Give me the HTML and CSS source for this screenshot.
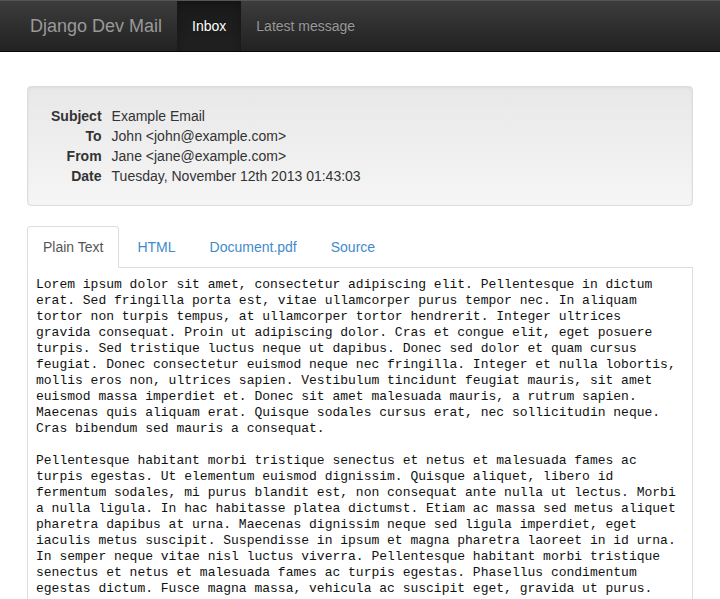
FILE: index.html
```html
<!DOCTYPE html>
<html lang="en">
<head>
<meta charset="utf-8">
<title>Django Dev Mail</title>
<link rel="stylesheet" href="styles.css">
</head>
<body>
<nav class="navbar">
  <a class="brand" href="#">Django Dev Mail</a>
  <ul class="nav">
    <li class="nav-item active"><a href="#">Inbox</a></li>
    <li class="nav-item"><a href="#">Latest message</a></li>
  </ul>
</nav>
<main class="main">
  <section class="well">
    <div class="headers">
      <div class="label">Subject</div><div class="value">Example Email</div>
      <div class="label">To</div><div class="value">John &lt;john@example.com&gt;</div>
      <div class="label">From</div><div class="value">Jane &lt;jane@example.com&gt;</div>
      <div class="label">Date</div><div class="value">Tuesday, November 12th 2013 01:43:03</div>
    </div>
  </section>
  <ul class="tabs">
    <li class="tab active"><a href="#">Plain Text</a></li>
    <li class="tab"><a href="#">HTML</a></li>
    <li class="tab"><a href="#">Document.pdf</a></li>
    <li class="tab"><a href="#">Source</a></li>
  </ul>
  <div class="tab-content"><pre class="body-text">Lorem ipsum dolor sit amet, consectetur adipiscing elit. Pellentesque in dictum
erat. Sed fringilla porta est, vitae ullamcorper purus tempor nec. In aliquam
tortor non turpis tempus, at ullamcorper tortor hendrerit. Integer ultrices
gravida consequat. Proin ut adipiscing dolor. Cras et congue elit, eget posuere
turpis. Sed tristique luctus neque ut dapibus. Donec sed dolor et quam cursus
feugiat. Donec consectetur euismod neque nec fringilla. Integer et nulla lobortis,
mollis eros non, ultrices sapien. Vestibulum tincidunt feugiat mauris, sit amet
euismod massa imperdiet et. Donec sit amet malesuada mauris, a rutrum sapien.
Maecenas quis aliquam erat. Quisque sodales cursus erat, nec sollicitudin neque.
Cras bibendum sed mauris a consequat.

Pellentesque habitant morbi tristique senectus et netus et malesuada fames ac
turpis egestas. Ut elementum euismod dignissim. Quisque aliquet, libero id
fermentum sodales, mi purus blandit est, non consequat ante nulla ut lectus. Morbi
a nulla ligula. In hac habitasse platea dictumst. Etiam ac massa sed metus aliquet
pharetra dapibus at urna. Maecenas dignissim neque sed ligula imperdiet, eget
iaculis metus suscipit. Suspendisse in ipsum et magna pharetra laoreet in id urna.
In semper neque vitae nisl luctus viverra. Pellentesque habitant morbi tristique
senectus et netus et malesuada fames ac turpis egestas. Phasellus condimentum
egestas dictum. Fusce magna massa, vehicula ac suscipit eget, gravida ut purus.</pre></div>
</main>
</body>
</html>
```

FILE: styles.css
```css
* {
  box-sizing: border-box;
}

html, body {
  margin: 0;
  padding: 0;
}

body {
  font-family: "Liberation Sans", Arial, sans-serif;
  font-size: 14px;
  line-height: 20px;
  color: #333;
  background: #fff;
}

a {
  text-decoration: none;
}

.navbar {
  display: flex;
  align-items: stretch;
  height: 52px;
  padding: 0 15px;
  background: linear-gradient(to bottom, #3c3c3c 0%, #222 100%);
  border-top: 1px solid #555;
  border-bottom: 1px solid #080808;
}

.brand {
  display: flex;
  align-items: center;
  padding: 0 15px;
  font-size: 18px;
  color: #999;
}

.nav {
  display: flex;
  margin: 0;
  padding: 0;
  list-style: none;
}

.nav-item a {
  display: flex;
  align-items: center;
  height: 100%;
  padding: 0 15px;
  color: #999;
  text-shadow: 0 -1px 0 rgba(0, 0, 0, 0.25);
}

.nav-item.active a {
  color: #fff;
  background: linear-gradient(to bottom, #1a1a1a 0%, #202020 100%);
  box-shadow: inset 0 3px 9px rgba(0, 0, 0, 0.25);
}

.main {
  padding: 34px 27px 0;
}

.well {
  padding: 19px;
  margin-bottom: 20px;
  background: linear-gradient(to bottom, #e8e8e8 0%, #f5f5f5 100%);
  border: 1px solid #dcdcdc;
  border-radius: 4px;
  box-shadow: inset 0 1px 3px rgba(0, 0, 0, 0.05), 0 1px 0 rgba(255, 255, 255, 0.1);
}

.headers {
  display: grid;
  grid-template-columns: auto 1fr;
  column-gap: 10px;
  padding-left: 4px;
}

.label {
  font-weight: bold;
  text-align: right;
}

.tabs {
  display: flex;
  margin: 0;
  padding: 0;
  list-style: none;
  border-bottom: 1px solid #ddd;
}

.tab {
  margin-bottom: -1px;
  margin-right: 2px;
}

.tab a {
  display: block;
  padding: 10px 15px;
  line-height: 20px;
  color: #428bca;
  border: 1px solid transparent;
  border-radius: 4px 4px 0 0;
}

.tab.active a {
  color: #555;
  background: #fff;
  border-color: #ddd;
  border-bottom-color: transparent;
}

.tab-content {
  border: 1px solid #ddd;
  border-top: 0;
  padding: 9px 9px 8px 8px;
}

.body-text {
  margin: 0;
  font-family: "Liberation Mono", "Courier New", monospace;
  font-size: 13px;
  line-height: 16px;
  color: #111;
  white-space: pre-wrap;
}
```
